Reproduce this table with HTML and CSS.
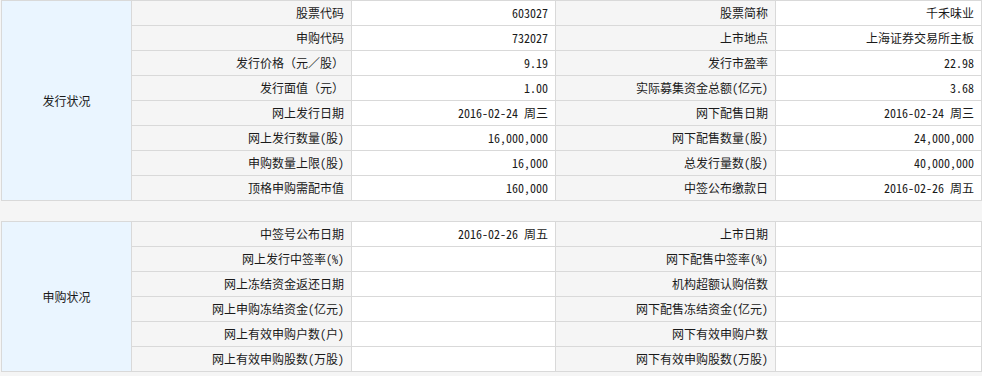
FILE: index.html
```html
<html>
<head>
	<meta charset="utf-8">
	<title>新股发行</title>
	<link rel="stylesheet" href="styles.css">
</head>

<body>

<div id='ipo'>
<table class='info'>
	<colgroup>
		<col class='c-group'>
		<col class='c-label'>
		<col class='c-value'>
		<col class='c-label'>
		<col class='c-last'>
	</colgroup>
	<tr>
		<th class='group' rowspan="8">发行状况</th>
		<th>股票代码</th>
		<td>603027</td>
		<th>股票简称</th>
		<td>千禾味业</td>
	</tr>
	<tr>
		<th>申购代码</th>
		<td>732027</td>
		<th>上市地点</th>
		<td>上海证券交易所主板</td>
	</tr>
	<tr>
		<th>发行价格（元／股）</th>
		<td>9.19</td>
		<th>发行市盈率</th>
		<td>22.98</td>
	</tr>
	<tr>
		<th>发行面值（元）</th>
		<td>1.00</td>
		<th>实际募集资金总额(亿元)</th>
		<td>3.68</td>
	</tr>
	<tr>
		<th>网上发行日期</th>
		<td>2016-02-24 周三</td>
		<th>网下配售日期</th>
		<td>2016-02-24 周三</td>
	</tr>
	<tr>
		<th>网上发行数量(股)</th>
		<td>16,000,000</td>
		<th>网下配售数量(股)</th>
		<td>24,000,000</td>
	</tr>
	<tr>
		<th>申购数量上限(股)</th>
		<td>16,000</td>
		<th>总发行量数(股)</th>
		<td>40,000,000</td>
	</tr>
	<tr>
		<th>顶格申购需配市值</th>
		<td>160,000</td>
		<th>中签公布缴款日</th>
		<td>2016-02-26 周五</td>
	</tr>
</table>

<table class='info'>
	<colgroup>
		<col class='c-group'>
		<col class='c-label'>
		<col class='c-value'>
		<col class='c-label'>
		<col class='c-last'>
	</colgroup>
	<tr>
		<th class='group' rowspan="6">申购状况</th>
		<th>中签号公布日期</th>
		<td>2016-02-26 周五</td>
		<th>上市日期</th>
		<td></td>
	</tr>
	<tr>
		<th>网上发行中签率(%)</th>
		<td></td>
		<th>网下配售中签率(%)</th>
		<td></td>
	</tr>
	<tr>
		<th>网上冻结资金返还日期</th>
		<td></td>
		<th>机构超额认购倍数</th>
		<td></td>
	</tr>
	<tr>
		<th>网上申购冻结资金(亿元)</th>
		<td></td>
		<th>网下配售冻结资金(亿元)</th>
		<td></td>
	</tr>
	<tr>
		<th>网上有效申购户数(户)</th>
		<td></td>
		<th>网下有效申购户数</th>
		<td></td>
	</tr>
	<tr>
		<th>网上有效申购股数(万股)</th>
		<td></td>
		<th>网下有效申购股数(万股)</th>
		<td></td>
	</tr>
</table>
</div>

</body>
</html>
```

FILE: styles.css
```css
body{
	margin:0;
	background-color:#f5f5f5;
	font-family:"Noto Sans Mono CJK SC","Noto Sans CJK SC","Liberation Mono",monospace;
	font-size:12px;
	color:#1a1a1a;
}
#ipo{
	padding:0 1px;
}
.info{
	border-collapse:collapse;
	table-layout:fixed;
	width:980px;
	margin-bottom:20px;
	font-size:12px;
	color:#1a1a1a;
}
.c-group{ width:130px; }
.c-label{ width:220px; }
.c-value{ width:204px; }
.c-last{ width:206px; }

th,td{
	border:1px solid #d9d9d9;
	height:24px;
	padding:0 7px 0 0;
	line-height:24px;
	text-align:right;
	white-space:nowrap;
	overflow:hidden;
}
th{
	font-weight:normal;
	background-color:#f5f5f5;
}
td{
	background-color:#fff;
}
th.group{
	text-align:center;
	padding:0;
	background-color:#eaf5ff;
}
```
